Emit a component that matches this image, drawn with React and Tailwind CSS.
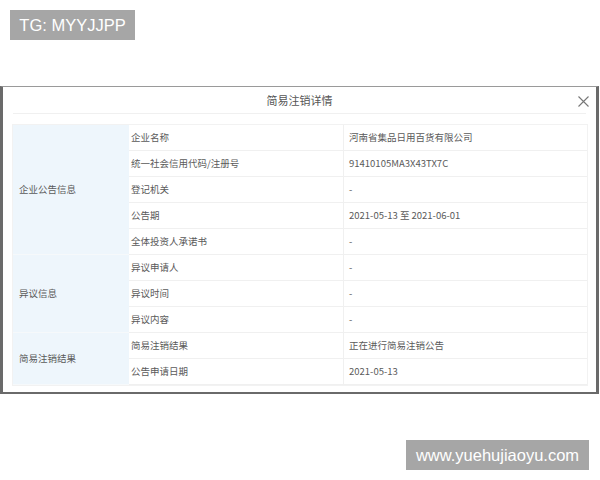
import React from 'react';

const groups = [
  {
    name: '企业公告信息',
    rows: [
      ['企业名称', '河南省集品日用百货有限公司'],
      ['统一社会信用代码/注册号', '91410105MA3X43TX7C'],
      ['登记机关', '-'],
      ['公告期', '2021-05-13 至 2021-06-01'],
      ['全体投资人承诺书', '-'],
    ],
  },
  {
    name: '异议信息',
    rows: [
      ['异议申请人', '-'],
      ['异议时间', '-'],
      ['异议内容', '-'],
    ],
  },
  {
    name: '简易注销结果',
    rows: [
      ['简易注销结果', '正在进行简易注销公告'],
      ['公告申请日期', '2021-05-13'],
    ],
  },
];

const font = { fontFamily: '"Noto Sans CJK SC", "Liberation Sans", sans-serif' };

export default function App() {
  return (
    <div className="relative w-[600px] h-[480px] bg-white overflow-hidden" style={font}>
      {/* watermark top */}
      <div className="absolute left-[10px] top-[10px] h-[30px] w-[125px] flex items-center justify-center bg-[#a6a6a6] text-white text-[16.5px]" style={{ fontFamily: '"Liberation Sans", sans-serif' }}>
        TG: MYYJJPP
      </div>

      <div className="pt-[86px]">
        <div className="w-[599px] h-[308px] bg-white border-t border-t-[#9a9a9a] border-l-[3px] border-l-[#6a6a6a] border-r-[3px] border-r-[#6a6a6a] border-b-2 border-b-[#6a6a6a]">
          {/* header */}
          <div className="relative h-[27px] mx-[10px] flex items-center justify-center border-b border-[#f0f0f0]">
            <span className="text-[11px] text-[#555]">简易注销详情</span>
            <svg className="absolute right-[-3px] top-[9px]" width="11" height="11" viewBox="0 0 11 11">
              <path d="M0.5 0.5 L10.5 10.5 M10.5 0.5 L0.5 10.5" stroke="#777" strokeWidth="1.1" fill="none" />
            </svg>
          </div>

          {/* table */}
          <div className="mt-[10px] ml-[9px] w-[576px] grid grid-cols-[116px_214px_1fr] auto-rows-[26px] text-[9.5px] text-[#5a5a5a] border border-[#f2f2f2]">
            {groups.map((g) => (
              <React.Fragment key={g.name}>
                <div
                  className="bg-[#eef6fc] flex items-center pl-[6px] border-b border-[#f6f9fb]"
                  style={{ gridRow: `span ${g.rows.length}` }}
                >
                  {g.name}
                </div>
                {g.rows.map(([label, value]) => (
                  <React.Fragment key={label}>
                    <div className="flex items-center pl-[2px] border-b border-[#f0f0f0]">{label}</div>
                    <div className="flex items-center pl-[5px] border-b border-l border-[#f0f0f0]">{value}</div>
                  </React.Fragment>
                ))}
              </React.Fragment>
            ))}
          </div>
        </div>
      </div>

      {/* watermark bottom */}
      <div className="absolute left-[406px] top-[440px] h-[30px] w-[183px] flex items-center justify-center bg-[#a6a6a6] text-white text-[16.5px]" style={{ fontFamily: '"Liberation Sans", sans-serif' }}>
        www.yuehujiaoyu.com
      </div>
    </div>
  );
}
